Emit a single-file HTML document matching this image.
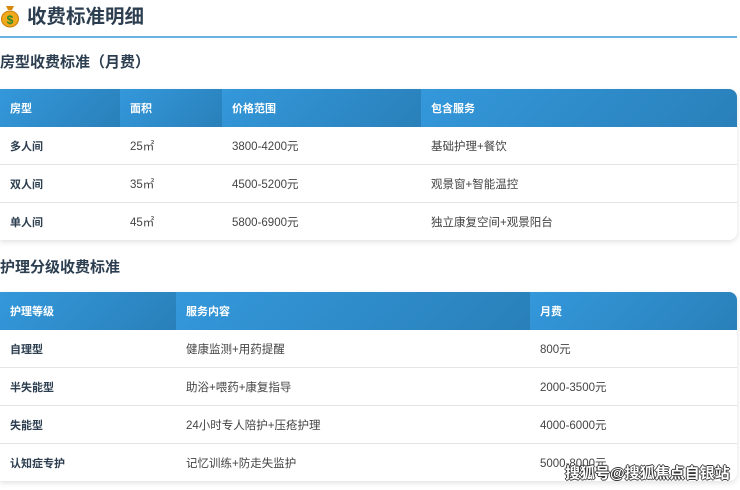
<!DOCTYPE html>
<html><head><meta charset="utf-8"><style>
body{margin:0;width:740px;height:490px;overflow:hidden;background:#fff;font-family:"Liberation Sans","Noto Sans CJK SC",sans-serif;color:#2c3e50;position:relative}
.h1{position:absolute;left:0;top:2px;height:34px;width:737px;border-bottom:2px solid #6cb1e1;font-size:19.5px;font-weight:bold;line-height:30px}
.h1 span.ic{display:inline-block;width:20px;margin-right:7px;vertical-align:top}
.h2{position:absolute;left:0;font-size:15px;font-weight:bold;line-height:20px}
table{position:absolute;left:0;width:737px;border-collapse:separate;border-spacing:0;font-size:11.5px;box-shadow:0 2px 6px rgba(0,0,0,.12);border-radius:0 8px 8px 0;overflow:hidden}
th{height:38px;padding:0 0 0 10px;text-align:left;color:#fff;font-weight:bold;font-size:11px;background:linear-gradient(135deg,#3498db,#2980b9)}
td{height:37px;padding:0 0 0 10px;border-top:1px solid #e4e4e4;color:#444}
tr:nth-child(2) td{border-top:none}
td:first-child{font-weight:bold;color:#2c3e50;font-size:11px}
.wm{position:absolute;left:565px;top:462px;font-size:15px;font-weight:bold;color:#fff;text-shadow:-1px 0 #333,1px 0 #333,0 -1px #333,0 1px #333}
</style></head><body>
<div class="h1"><span class="ic"><svg width="20" height="26" viewBox="0 0 20 26"><path d="M6 4 L14 4 L12 8 L8 8Z" fill="#d4890f"/><ellipse cx="10" cy="17" rx="8.5" ry="8" fill="#f0a81c" stroke="#c77d0a"/><text x="10" y="22" font-size="12" text-anchor="middle" fill="#2a8a2a" font-weight="bold">$</text></svg></span>收费标准明细</div>
<div class="h2" style="top:53px">房型收费标准（月费）</div>
<table style="top:89px">
<tr><th style="width:110px">房型</th><th style="width:92px">面积</th><th style="width:189px">价格范围</th><th>包含服务</th></tr>
<tr><td>多人间</td><td>25㎡</td><td>3800-4200元</td><td>基础护理+餐饮</td></tr>
<tr><td>双人间</td><td>35㎡</td><td>4500-5200元</td><td>观景窗+智能温控</td></tr>
<tr><td>单人间</td><td>45㎡</td><td>5800-6900元</td><td>独立康复空间+观景阳台</td></tr>
</table>
<div class="h2" style="top:258px">护理分级收费标准</div>
<table style="top:292px">
<tr><th style="width:166px">护理等级</th><th style="width:344px">服务内容</th><th>月费</th></tr>
<tr><td>自理型</td><td>健康监测+用药提醒</td><td>800元</td></tr>
<tr><td>半失能型</td><td>助浴+喂药+康复指导</td><td>2000-3500元</td></tr>
<tr><td>失能型</td><td>24小时专人陪护+压疮护理</td><td>4000-6000元</td></tr>
<tr><td>认知症专护</td><td>记忆训练+防走失监护</td><td>5000-8000元</td></tr>
</table>
<div class="wm">搜狐号@搜狐焦点自银站</div>
</body></html>
